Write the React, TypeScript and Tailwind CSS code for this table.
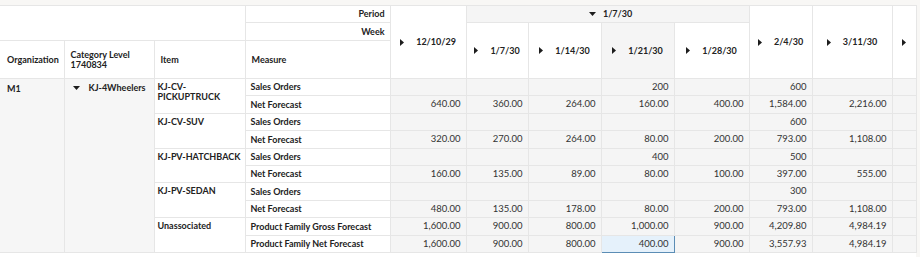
import React from 'react';

const cols = [64, 90, 91, 145, 76, 62, 73, 73, 75, 63, 80, 24];

type Row = { item?: string[]; measure: string; vals: string[] };

const rows: Row[] = [
  { item: ['KJ-CV-', 'PICKUPTRUCK'], measure: 'Sales Orders', vals: ['', '', '', '200', '', '600', '', ''] },
  { measure: 'Net Forecast', vals: ['640.00', '360.00', '264.00', '160.00', '400.00', '1,584.00', '2,216.00', ''] },
  { item: ['KJ-CV-SUV'], measure: 'Sales Orders', vals: ['', '', '', '', '', '600', '', ''] },
  { measure: 'Net Forecast', vals: ['320.00', '270.00', '264.00', '80.00', '200.00', '793.00', '1,108.00', ''] },
  { item: ['KJ-PV-HATCHBACK'], measure: 'Sales Orders', vals: ['', '', '', '400', '', '500', '', ''] },
  { measure: 'Net Forecast', vals: ['160.00', '135.00', '89.00', '80.00', '100.00', '397.00', '555.00', ''] },
  { item: ['KJ-PV-SEDAN'], measure: 'Sales Orders', vals: ['', '', '', '', '', '300', '', ''] },
  { measure: 'Net Forecast', vals: ['480.00', '135.00', '178.00', '80.00', '200.00', '793.00', '1,108.00', ''] },
  { item: ['Unassociated'], measure: 'Product Family Gross Forecast', vals: ['1,600.00', '900.00', '800.00', '1,000.00', '900.00', '4,209.80', '4,984.19', ''] },
  { measure: 'Product Family Net Forecast', vals: ['1,600.00', '900.00', '800.00', '400.00', '900.00', '3,557.93', '4,984.19', ''] },
];

function Right() {
  return (
    <svg width="4" height="7" viewBox="0 0 4 7" className="shrink-0">
      <path d="M0 0L4 3.5L0 7Z" fill="#1d1d1d" />
    </svg>
  );
}

function Down() {
  return (
    <svg width="7" height="4" viewBox="0 0 7 4" className="shrink-0">
      <path d="M0 0H7L3.5 4Z" fill="#1d1d1d" />
    </svg>
  );
}

function DateHead({ label }: { label?: string }) {
  return (
    <div className="flex items-center justify-center gap-[12px]">
      <Right />
      {label && <span>{label}</span>}
    </div>
  );
}

export default function App() {
  const bd = 'border border-[#e6e6e6]';
  return (
    <div className="w-[920px] h-[257px] bg-[#f8f7f5] pt-[5px] overflow-hidden font-['Lato','Noto_Sans',sans-serif] text-[9px] text-[#222]">
      <div className="w-[916px] bg-white">
        <table className="table-fixed border-collapse w-[916px]">
          <colgroup>
            {cols.map((w, i) => (
              <col key={i} style={{ width: w }} />
            ))}
          </colgroup>
          <thead className="font-bold">
            <tr className="h-[17px]">
              <th colSpan={3} rowSpan={2} className={`${bd} border-l-0`} />
              <th className={`${bd} text-right pr-[5px] font-bold`}>Period</th>
              <th rowSpan={3} className={`${bd} font-bold`}>
                <DateHead label="12/10/29" />
              </th>
              <th colSpan={4} className={`${bd} bg-[#f5f5f5] font-bold`}>
                <div className="flex items-center justify-center gap-[7px] pl-[6px]">
                  <Down />
                  <span>1/7/30</span>
                </div>
              </th>
              <th rowSpan={3} className={`${bd} font-bold`}>
                <DateHead label="2/4/30" />
              </th>
              <th rowSpan={3} className={`${bd} font-bold`}>
                <DateHead label="3/11/30" />
              </th>
              <th rowSpan={3} className={`${bd} font-bold`}>
                <DateHead />
              </th>
            </tr>
            <tr className="h-[18px]">
              <th className={`${bd} text-right pr-[5px] font-bold`}>Week</th>
              <th rowSpan={2} className={`${bd} font-bold`}>
                <DateHead label="1/7/30" />
              </th>
              <th rowSpan={2} className={`${bd} font-bold`}>
                <DateHead label="1/14/30" />
              </th>
              <th rowSpan={2} className={`${bd} bg-[#f5f5f5] font-bold`}>
                <DateHead label="1/21/30" />
              </th>
              <th rowSpan={2} className={`${bd} font-bold`}>
                <DateHead label="1/28/30" />
              </th>
            </tr>
            <tr className="h-[38px]">
              <th className={`${bd} border-l-0 text-left pl-[7px] font-bold`}>Organization</th>
              <th className={`${bd} text-left pl-[6px] font-bold leading-[10px]`}>
                Category Level
                <br />
                1740834
              </th>
              <th className={`${bd} text-left pl-[6px] font-bold`}>Item</th>
              <th className={`${bd} text-left pl-[6px] font-bold`}>Measure</th>
            </tr>
          </thead>
          <tbody>
            {rows.map((r, i) => (
              <tr key={i} className="h-[17.4px]">
                {i === 0 && (
                  <>
                    <td rowSpan={10} className={`${bd} border-l-0 bg-[#f6f6f6] align-top pl-[7px] pt-[3px] font-bold`}>
                      M1
                    </td>
                    <td rowSpan={10} className={`${bd} bg-[#f6f6f6] align-top pl-[8px] pt-[3px] font-bold`}>
                      <div className="flex items-center gap-[9px] h-[12px]">
                        <Down />
                        <span>KJ-4Wheelers</span>
                      </div>
                    </td>
                  </>
                )}
                {r.item && (
                  <td rowSpan={2} className={`${bd} align-top pl-[3px] pt-[3px] font-bold leading-[10px] whitespace-nowrap`}>
                    {r.item.map((t, j) => (
                      <div key={j}>{t}</div>
                    ))}
                  </td>
                )}
                <td className={`${bd} pl-[5px] font-bold whitespace-nowrap`}>{r.measure}</td>
                {r.vals.map((v, j) => {
                  const sel = i === 9 && j === 3;
                  return (
                    <td
                      key={j}
                      className={
                        sel
                          ? 'border border-[#5b8db5] bg-[#e5f1fb] text-right pr-[5px] text-[9.5px] text-[#333]'
                          : `${bd} bg-[#f5f5f5] text-right pr-[5px] text-[9.5px] text-[#333]`
                      }
                    >
                      {v}
                    </td>
                  );
                })}
              </tr>
            ))}
          </tbody>
        </table>
      </div>
      <div className="w-[916px] h-[10px] bg-white" />
    </div>
  );
}
